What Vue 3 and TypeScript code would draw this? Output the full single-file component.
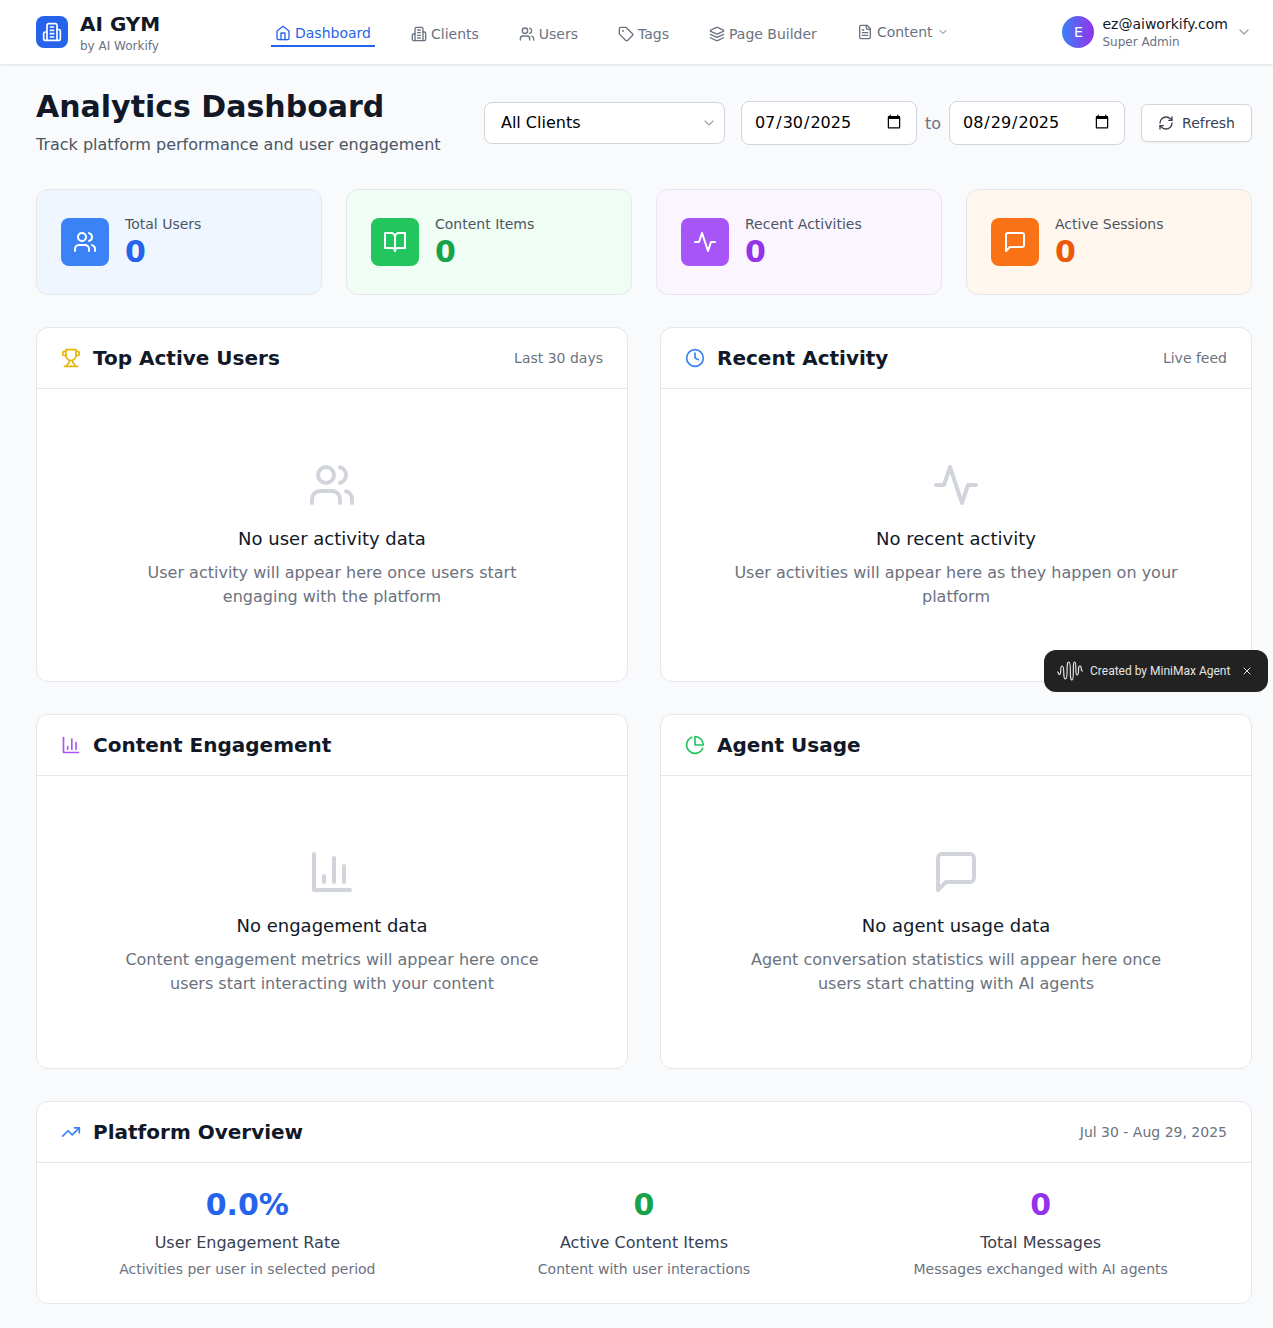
<script setup lang="ts">
const icons: Record<string, string> = {
  users: '<path d="M16 21v-2a4 4 0 0 0-4-4H6a4 4 0 0 0-4 4v2"/><circle cx="9" cy="7" r="4"/><path d="M22 21v-2a4 4 0 0 0-3-3.87"/><path d="M16 3.13a4 4 0 0 1 0 7.75"/>',
  book: '<path d="M2 3h6a4 4 0 0 1 4 4v14a3 3 0 0 0-3-3H2z"/><path d="M22 3h-6a4 4 0 0 0-4 4v14a3 3 0 0 1 3-3h7z"/>',
  activity: '<polyline points="22 12 18 12 15 21 9 3 6 12 2 12"/>',
  message: '<path d="M21 15a2 2 0 0 1-2 2H7l-4 4V5a2 2 0 0 1 2-2h14a2 2 0 0 1 2 2z"/>',
  trophy: '<path d="M6 9H4.5a2.5 2.5 0 0 1 0-5H6"/><path d="M18 9h1.5a2.5 2.5 0 0 0 0-5H18"/><path d="M4 22h16"/><path d="M10 14.66V17c0 .55-.47.98-.97 1.21C7.85 18.75 7 20.24 7 22"/><path d="M14 14.66V17c0 .55.47.98.97 1.21C16.15 18.75 17 20.24 17 22"/><path d="M18 2H6v7a6 6 0 0 0 12 0V2Z"/>',
  clock: '<circle cx="12" cy="12" r="10"/><polyline points="12 6 12 12 16 14"/>',
  bars: '<path d="M3 3v18h18"/><path d="M18 17V9"/><path d="M13 17V5"/><path d="M8 17v-3"/>',
  pie: '<path d="M21.21 15.89A10 10 0 1 1 8 2.83"/><path d="M22 12A10 10 0 0 0 12 2v10z"/>',
  trend: '<polyline points="22 7 13.5 15.5 8.5 10.5 2 17"/><polyline points="16 7 22 7 22 13"/>',
  refresh: '<path d="M3 12a9 9 0 0 1 9-9 9.75 9.75 0 0 1 6.74 2.74L21 8"/><path d="M21 3v5h-5"/><path d="M21 12a9 9 0 0 1-9 9 9.75 9.75 0 0 1-6.74-2.74L3 16"/><path d="M8 16H3v5"/>',
  home: '<path d="m3 9 9-7 9 7v11a2 2 0 0 1-2 2H5a2 2 0 0 1-2-2z"/><polyline points="9 22 9 12 15 12 15 22"/>',
  building: '<path d="M6 22V4a2 2 0 0 1 2-2h8a2 2 0 0 1 2 2v18Z"/><path d="M6 12H4a2 2 0 0 0-2 2v6a2 2 0 0 0 2 2h2"/><path d="M18 9h2a2 2 0 0 1 2 2v9a2 2 0 0 1-2 2h-2"/><path d="M10 6h4"/><path d="M10 10h4"/><path d="M10 14h4"/><path d="M10 18h4"/>',
  tag: '<path d="M12.586 2.586A2 2 0 0 0 11.172 2H4a2 2 0 0 0-2 2v7.172a2 2 0 0 0 .586 1.414l8.704 8.704a2.426 2.426 0 0 0 3.42 0l6.58-6.58a2.426 2.426 0 0 0 0-3.42z"/><circle cx="7.5" cy="7.5" r=".5" fill="currentColor"/>',
  layers: '<path d="m12.83 2.18a2 2 0 0 0-1.66 0L2.6 6.08a1 1 0 0 0 0 1.83l8.58 3.91a2 2 0 0 0 1.66 0l8.58-3.9a1 1 0 0 0 0-1.83Z"/><path d="m22 17.65-9.17 4.16a2 2 0 0 1-1.66 0L2 17.65"/><path d="m22 12.65-9.17 4.16a2 2 0 0 1-1.66 0L2 12.65"/>',
  file: '<path d="M15 2H6a2 2 0 0 0-2 2v16a2 2 0 0 0 2 2h12a2 2 0 0 0 2-2V7Z"/><path d="M14 2v4a2 2 0 0 0 2 2h4"/><path d="M10 9H8"/><path d="M16 13H8"/><path d="M16 17H8"/>',
  chevron: '<path d="m6 9 6 6 6-6"/>',
  close: '<path d="M18 6 6 18"/><path d="m6 6 12 12"/>'
}

const navItems = [
  { label: 'Dashboard', icon: 'home', cls: 'active' },
  { label: 'Clients', icon: 'building', cls: '' },
  { label: 'Users', icon: 'users', cls: '' },
  { label: 'Tags', icon: 'tag', cls: '' },
  { label: 'Page Builder', icon: 'layers', cls: '' }
]

const stats = [
  { label: 'Total Users', icon: 'users', cls: 'blue' },
  { label: 'Content Items', icon: 'book', cls: 'green' },
  { label: 'Recent Activities', icon: 'activity', cls: 'purple' },
  { label: 'Active Sessions', icon: 'message', cls: 'orange' }
]

const panels = [
  { title: 'Top Active Users', note: 'Last 30 days', icon: 'trophy', cls: 'ic-yellow', empty: 'users', head: 'No user activity data', text: 'User activity will appear here once users start engaging with the platform' },
  { title: 'Recent Activity', note: 'Live feed', icon: 'clock', cls: 'ic-blue', empty: 'activity', head: 'No recent activity', text: 'User activities will appear here as they happen on your platform' },
  { title: 'Content Engagement', note: '', icon: 'bars', cls: 'ic-purple', empty: 'bars', head: 'No engagement data', text: 'Content engagement metrics will appear here once users start interacting with your content' },
  { title: 'Agent Usage', note: '', icon: 'pie', cls: 'ic-green', empty: 'message', head: 'No agent usage data', text: 'Agent conversation statistics will appear here once users start chatting with AI agents' }
]

const overview = [
  { value: '0.0%', label: 'User Engagement Rate', sub: 'Activities per user in selected period', cls: 'blue' },
  { value: '0', label: 'Active Content Items', sub: 'Content with user interactions', cls: 'green' },
  { value: '0', label: 'Total Messages', sub: 'Messages exchanged with AI agents', cls: 'purple' }
]
</script>

<template>
  <div class="page">
    <header class="topbar">
      <div class="brand">
        <div class="logo">
          <svg class="icon" viewBox="0 0 24 24" v-html="icons.building"></svg>
        </div>
        <div>
          <div class="brand-name">AI GYM</div>
          <div class="brand-sub">by AI Workify</div>
        </div>
      </div>

      <nav class="nav">
        <a v-for="item in navItems" :key="item.label" class="nav-item" :class="item.cls">
          <svg class="icon" viewBox="0 0 24 24" v-html="icons[item.icon]"></svg>
          {{ item.label }}
        </a>
        <a class="nav-item content">
          <svg class="icon" viewBox="0 0 24 24" v-html="icons.file"></svg>
          Content
          <svg class="icon small" viewBox="0 0 24 24" v-html="icons.chevron"></svg>
        </a>
      </nav>

      <div class="account">
        <div class="avatar">E</div>
        <div class="account-text">
          <div class="email">ez@aiworkify.com</div>
          <div class="role">Super Admin</div>
        </div>
        <svg class="icon account-chevron" viewBox="0 0 24 24" v-html="icons.chevron"></svg>
      </div>
    </header>

    <main class="main">
      <section class="title-row">
        <div>
          <h1>Analytics Dashboard</h1>
          <p>Track platform performance and user engagement</p>
        </div>
        <div class="filters">
          <div class="select-wrap">
            <select>
              <option>All Clients</option>
            </select>
            <svg class="icon" viewBox="0 0 24 24" v-html="icons.chevron"></svg>
          </div>
          <div class="dates">
            <input type="date" value="2025-07-30" />
            <span>to</span>
            <input type="date" value="2025-08-29" />
          </div>
          <button class="refresh">
            <svg class="icon" viewBox="0 0 24 24" v-html="icons.refresh"></svg>
            Refresh
          </button>
        </div>
      </section>

      <section class="stats">
        <div v-for="stat in stats" :key="stat.label" class="stat" :class="stat.cls">
          <div class="stat-icon">
            <svg class="icon" viewBox="0 0 24 24" v-html="icons[stat.icon]"></svg>
          </div>
          <div>
            <div class="stat-label">{{ stat.label }}</div>
            <div class="stat-value">0</div>
          </div>
        </div>
      </section>

      <section class="panels">
        <div v-for="panel in panels" :key="panel.title" class="panel">
          <div class="panel-head">
            <div class="panel-title">
              <svg class="icon" :class="panel.cls" viewBox="0 0 24 24" v-html="icons[panel.icon]"></svg>
              <h2>{{ panel.title }}</h2>
            </div>
            <span v-if="panel.note" class="note">{{ panel.note }}</span>
          </div>
          <div class="empty">
            <svg class="icon" viewBox="0 0 24 24" v-html="icons[panel.empty]"></svg>
            <h3>{{ panel.head }}</h3>
            <p>{{ panel.text }}</p>
          </div>
        </div>
      </section>

      <section class="panel">
        <div class="panel-head">
          <div class="panel-title">
            <svg class="icon ic-blue" viewBox="0 0 24 24" v-html="icons.trend"></svg>
            <h2>Platform Overview</h2>
          </div>
          <span class="note">Jul 30 - Aug 29, 2025</span>
        </div>
        <div class="overview">
          <div v-for="item in overview" :key="item.label" class="metric" :class="item.cls">
            <div class="metric-value">{{ item.value }}</div>
            <div class="metric-label">{{ item.label }}</div>
            <div class="metric-sub">{{ item.sub }}</div>
          </div>
        </div>
      </section>
    </main>

    <div class="toast">
      <svg class="wave" viewBox="0 0 26 20">
        <path d="M.5 11C2.5 11 .5 13.5 2.5 13.5C5 13.5 2.5 5 5 5C8.5 5 5 18 8.5 18C11.7 18 8.5 1 11.7 1C15 1 11.7 19 15 19C17.7 19 15 1 17.7 1C20 1 17.7 14 20 14C23 14 20 5 23 5C25.5 5 23 10 25.5 10" />
      </svg>
      <span>Created by MiniMax Agent</span>
      <svg class="icon toast-close" viewBox="0 0 24 24" v-html="icons.close"></svg>
    </div>
  </div>
</template>

<style>
body {
  background: #f9fafb;
}
</style>

<style scoped>
.page {
  position: relative;
  width: 1273px;
  min-height: 1328px;
  background: #f9fafb;
  font-family: "DejaVu Sans", sans-serif;
  color: #111827;
}

.icon {
  width: 16px;
  height: 16px;
  fill: none;
  stroke: currentColor;
  stroke-width: 2;
  stroke-linecap: round;
  stroke-linejoin: round;
  flex-shrink: 0;
}

.topbar {
  height: 65px;
  box-sizing: border-box;
  padding: 0 21px 0 36px;
  display: flex;
  align-items: center;
  background: #fff;
  border-bottom: 1px solid #e5e7eb;
  box-shadow: 0 1px 2px rgba(0, 0, 0, 0.05);
}

.brand {
  display: flex;
  align-items: center;
  gap: 12px;
  width: 235px;
}

.logo {
  width: 32px;
  height: 32px;
  border-radius: 8px;
  background: #2563eb;
  color: #fff;
  display: flex;
  align-items: center;
  justify-content: center;
}

.logo .icon {
  width: 20px;
  height: 20px;
}

.brand-name {
  font-size: 20px;
  line-height: 28px;
  font-weight: 700;
}

.brand-sub {
  font-size: 12px;
  line-height: 16px;
  color: #6b7280;
}

.nav {
  display: flex;
  align-items: center;
  gap: 32px;
}

.nav-item {
  display: flex;
  align-items: center;
  gap: 4px;
  padding: 8px 4px 4px;
  font-size: 14px;
  line-height: 20px;
  color: #6b7280;
}

.nav-item.active {
  padding: 6px 4px 2px;
  color: #2563eb;
  border-bottom: 2px solid #2563eb;
}

.nav-item.content {
  padding: 4px;
}

.icon.small {
  width: 12px;
  height: 12px;
}

.account {
  margin-left: auto;
  display: flex;
  align-items: center;
}

.avatar {
  width: 32px;
  height: 32px;
  border-radius: 50%;
  background: linear-gradient(90deg, #3b82f6, #9333ea);
  color: #fff;
  font-size: 14px;
  display: flex;
  align-items: center;
  justify-content: center;
}

.account-text {
  margin-left: 8px;
}

.email {
  font-size: 14px;
  line-height: 20px;
  color: #111827;
}

.role {
  font-size: 12px;
  line-height: 16px;
  color: #6b7280;
}

.account-chevron {
  margin-left: 8px;
  color: #9ca3af;
}

.main {
  padding: 24px 21px 24px 36px;
}

.title-row {
  display: flex;
  align-items: center;
  justify-content: space-between;
  margin-bottom: 32px;
}

h1 {
  margin: 0;
  font-size: 30px;
  line-height: 36px;
  font-weight: 700;
}

.title-row p {
  margin: 8px 0 0;
  font-size: 16px;
  line-height: 24px;
  color: #4b5563;
}

.filters {
  display: flex;
  align-items: center;
  gap: 16px;
}

.select-wrap {
  position: relative;
  width: 241px;
}

.select-wrap select {
  width: 100%;
  height: 42px;
  padding: 0 16px 2px;
  box-sizing: border-box;
  appearance: none;
  background: #fff;
  border: 1px solid #d1d5db;
  border-radius: 8px;
  font-family: inherit;
  font-size: 16px;
  color: #000;
}

.select-wrap .icon {
  position: absolute;
  right: 8px;
  top: 13px;
  color: #9ca3af;
  stroke-width: 1.75;
}

.dates {
  display: flex;
  align-items: center;
  gap: 8px;
  font-size: 16px;
  color: #6b7280;
}

.dates input {
  width: 176px;
  height: 44px;
  padding: 0 12px 2px;
  box-sizing: border-box;
  background: #fff;
  border: 1px solid #d1d5db;
  border-radius: 8px;
  font-family: inherit;
  font-size: 16px;
  color: #000;
}

.refresh {
  width: 111px;
  height: 38px;
  display: flex;
  align-items: center;
  justify-content: center;
  gap: 8px;
  background: #fff;
  border: 1px solid #d1d5db;
  border-radius: 6px;
  box-shadow: 0 1px 2px rgba(0, 0, 0, 0.05);
  font-family: inherit;
  font-size: 14px;
  color: #374151;
}

.stats {
  display: grid;
  grid-template-columns: repeat(4, 1fr);
  gap: 24px;
  margin-bottom: 32px;
}

.stat {
  display: flex;
  align-items: center;
  gap: 16px;
  padding: 24px;
  border: 1px solid #e5e7eb;
  border-radius: 12px;
}

.stat-icon {
  width: 48px;
  height: 48px;
  border-radius: 8px;
  color: #fff;
  display: flex;
  align-items: center;
  justify-content: center;
}

.stat-icon .icon {
  width: 24px;
  height: 24px;
}

.stat-label {
  font-size: 14px;
  line-height: 20px;
  color: #4b5563;
}

.stat-value {
  font-size: 30px;
  line-height: 36px;
  font-weight: 700;
}

.stat.blue { background: #eff6ff; }
.stat.green { background: #f0fdf4; }
.stat.purple { background: #faf5ff; }
.stat.orange { background: #fff7ed; }
.stat.blue .stat-icon { background: #3b82f6; }
.stat.green .stat-icon { background: #22c55e; }
.stat.purple .stat-icon { background: #a855f7; }
.stat.orange .stat-icon { background: #f97316; }
.stat.blue .stat-value, .metric.blue .metric-value { color: #2563eb; }
.stat.green .stat-value, .metric.green .metric-value { color: #16a34a; }
.stat.purple .stat-value, .metric.purple .metric-value { color: #9333ea; }
.stat.orange .stat-value { color: #ea580c; }

.panels {
  display: grid;
  grid-template-columns: repeat(2, 1fr);
  gap: 32px;
  margin-bottom: 32px;
}

.panel {
  background: #fff;
  border: 1px solid #e5e7eb;
  border-radius: 12px;
}

.panel-head {
  display: flex;
  align-items: center;
  justify-content: space-between;
  padding: 16px 24px;
  border-bottom: 1px solid #e5e7eb;
}

.panel-title {
  display: flex;
  align-items: center;
  gap: 12px;
}

.panel-title .icon {
  width: 20px;
  height: 20px;
}

h2 {
  margin: 0;
  font-size: 20px;
  line-height: 28px;
  font-weight: 700;
}

.note {
  font-size: 14px;
  line-height: 20px;
  color: #6b7280;
}

.ic-yellow { color: #eab308; }
.ic-blue { color: #3b82f6; }
.ic-purple { color: #a855f7; }
.ic-green { color: #22c55e; }

.empty {
  height: 292px;
  box-sizing: border-box;
  padding-top: 72px;
  display: flex;
  flex-direction: column;
  align-items: center;
  text-align: center;
}

.empty .icon {
  width: 48px;
  height: 48px;
  color: #d1d5db;
}

h3 {
  margin: 16px 0 8px;
  font-size: 18px;
  line-height: 28px;
  font-weight: 500;
}

.empty p {
  margin: 0;
  max-width: 448px;
  font-size: 16px;
  line-height: 24px;
  color: #6b7280;
}

.overview {
  display: grid;
  grid-template-columns: repeat(3, 1fr);
  gap: 24px;
  padding: 24px;
}

.metric {
  text-align: center;
}

.metric-value {
  font-size: 30px;
  line-height: 36px;
  font-weight: 700;
}

.metric-label {
  margin-top: 8px;
  font-size: 16px;
  line-height: 24px;
  color: #374151;
}

.metric-sub {
  margin-top: 4px;
  font-size: 14px;
  line-height: 20px;
  color: #6b7280;
}

.toast {
  position: absolute;
  top: 650px;
  left: 1044px;
  width: 224px;
  height: 42px;
  box-sizing: border-box;
  padding: 0 15px 0 13px;
  display: flex;
  align-items: center;
  background: #222;
  border-radius: 12px;
  font-family: Roboto, sans-serif;
  font-size: 12px;
  color: #e5e5e5;
}

.wave {
  width: 26px;
  height: 20px;
  margin-right: 7px;
  fill: none;
  stroke: #e5e5e5;
  stroke-width: 1.2;
  stroke-linecap: round;
}

.toast-close {
  margin-left: auto;
  width: 12px;
  height: 12px;
}
</style>
